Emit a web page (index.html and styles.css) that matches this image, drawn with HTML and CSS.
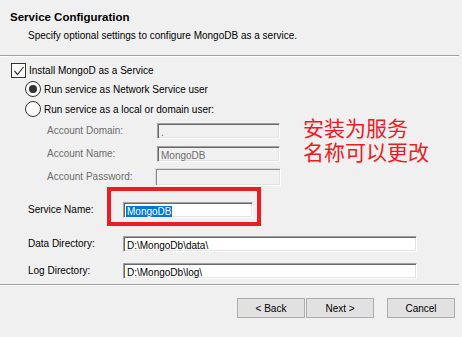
FILE: index.html
```html
<!DOCTYPE html>
<html lang="en">
<head>
    <meta charset="UTF-8">
    <title>Service Configuration</title>
    <link rel="stylesheet" href="styles.css">
</head>
<body>
    <div class="wizard">
        <div class="header">
            <div class="title">Service Configuration</div>
            <div class="subtitle">Specify optional settings to configure MongoDB as a service.</div>
        </div>
        <div class="rule"></div>

        <div class="content">
            <div class="check-row">
                <span class="checkbox">
                    <svg width="12" height="12" viewBox="0 0 12 12"><polyline points="1.5,6 4.5,9.5 10.5,2" fill="none" stroke="#333" stroke-width="1.2"/></svg>
                </span>
                <span>Install MongoD as a Service</span>
            </div>
            <div class="radio-row">
                <span class="radio checked"></span>
                <span>Run service as Network Service user</span>
            </div>
            <div class="radio-row">
                <span class="radio"></span>
                <span>Run service as a local or domain user:</span>
            </div>

            <div class="account-grid">
                <div class="label muted">Account Domain:</div>
                <div class="textbox disabled narrow">.</div>
                <div class="label muted">Account Name:</div>
                <div class="textbox disabled narrow">MongoDB</div>
                <div class="label muted">Account Password:</div>
                <div class="textbox disabled password"></div>
            </div>

            <div class="field-grid">
                <div class="label">Service Name:</div>
                <div class="textbox service"><span class="selected">MongoDB</span></div>
                <div class="label">Data Directory:</div>
                <div class="textbox wide">D:\MongoDb\data\</div>
                <div class="label">Log Directory:</div>
                <div class="textbox wide">D:\MongoDb\log\</div>
            </div>
        </div>

        <div class="rule"></div>
        <div class="buttons">
            <button class="btn back">&lt; Back</button>
            <button class="btn next">Next &gt;</button>
            <button class="btn">Cancel</button>
        </div>

        <!-- annotation drawn over the screenshot -->
        <div class="note">
            <div>安装为服务</div>
            <div>名称可以更改</div>
        </div>
        <div class="highlight-box"></div>
    </div>
</body>
</html>
```

FILE: styles.css
```css
body {
    margin: 0;
    background: #f0f0f0;
    font-family: "Liberation Sans", Arial, sans-serif;
    font-size: 10px;
    color: #000;
}
.wizard {
    position: relative;
    width: 462px;
    height: 337px;
    overflow: hidden;
}
.header {
    height: 55px;
    box-sizing: border-box;
    padding: 10px 0 0 10px;
}
.title {
    font-weight: bold;
    font-size: 11.5px;
    line-height: 14px;
}
.subtitle {
    margin: 5px 0 0 18px;
    line-height: 13px;
}
.rule {
    width: 459px;
    border-top: 1px solid #a0a0a0;
    border-bottom: 1px solid #fff;
}
.content {
    padding-top: 6px;
}
.check-row {
    display: flex;
    align-items: center;
    gap: 3px;
    height: 15px;
    margin-left: 11px;
}
.checkbox {
    width: 13px;
    height: 13px;
    border: 1px solid #333;
    background: #fff;
    display: flex;
    align-items: center;
    justify-content: center;
}
.radio-row {
    display: flex;
    align-items: center;
    gap: 3px;
    height: 16px;
    margin: 3px 0 0 25px;
}
.radio-row + .radio-row {
    margin-top: 4px;
}
.radio {
    width: 14px;
    height: 14px;
    border: 1px solid #333;
    border-radius: 50%;
    background: #fff;
    display: flex;
    align-items: center;
    justify-content: center;
}
.radio.checked::after {
    content: "";
    width: 8px;
    height: 8px;
    border-radius: 50%;
    background: #333;
}
.account-grid {
    display: grid;
    grid-template-columns: 110px 128px;
    grid-auto-rows: 23px;
    align-items: center;
    margin: 2px 0 0 47px;
}
.field-grid {
    display: grid;
    grid-template-columns: 95px auto;
    grid-template-rows: 27px 34px 27px;
    align-items: center;
    margin: 8px 0 0 28px;
}
.field-grid .label:nth-child(3),
.field-grid .textbox:nth-child(4) {
    margin-top: 7px;
}
.label {
    line-height: 13px;
}
.muted {
    color: #6d6d6d;
}
.textbox {
    box-sizing: border-box;
    height: 16px;
    padding: 2px 3px 0;
    line-height: 13px;
    background: #fff;
    border-top: 1px solid #a0a0a0;
    border-left: 1px solid #a0a0a0;
    border-right: 1px solid #fff;
    border-bottom: 1px solid #fff;
    box-shadow: inset 1px 1px 0 #696969, inset -1px -1px 0 #e3e3e3;
    white-space: nowrap;
    overflow: hidden;
}
.textbox.disabled {
    background: #f0f0f0;
    color: #6d6d6d;
}
.textbox.narrow {
    width: 123px;
}
.textbox.password {
    width: 126px;
    height: 18px;
    margin-left: -2px;
    border-color: #dadada #fff #fff #dadada;
    box-shadow: inset 1px 1px 0 #8c8c8c, inset -1px -1px 0 #e3e3e3;
}
.textbox.service {
    width: 130px;
    padding-left: 2px;
}
.textbox.wide {
    width: 294px;
}
.selected {
    background: #0078d7;
    color: #fff;
    padding: 0 1px;
}
.buttons {
    display: flex;
    justify-content: flex-end;
    padding: 12px 7px 0 0;
}
.btn {
    width: 68px;
    height: 20px;
    padding: 0;
    background: #e1e1e1;
    border: 1px solid #adadad;
    font-family: "Liberation Sans", Arial, sans-serif;
    font-size: 10px;
    color: #000;
}
.btn.back {
    margin-right: 1px;
}
.btn.next {
    margin-right: 13px;
}
.note {
    position: absolute;
    left: 303px;
    top: 115px;
    font-family: "Noto Sans CJK SC", sans-serif;
    font-size: 21px;
    line-height: 24px;
    color: #ed1c24;
}
.highlight-box {
    position: absolute;
    left: 107px;
    top: 187px;
    width: 146px;
    height: 31px;
    border: 4px solid #ed1c24;
}
```
